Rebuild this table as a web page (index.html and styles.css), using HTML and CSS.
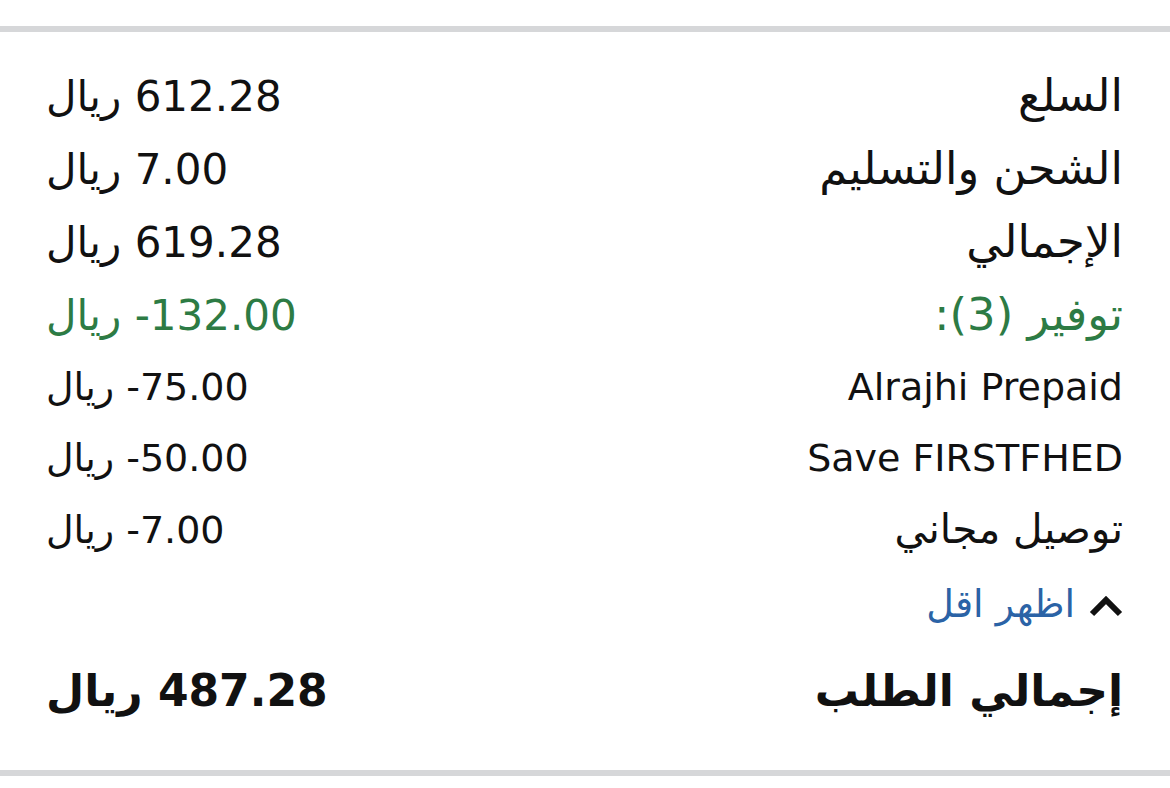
FILE: index.html
```html
<!DOCTYPE html>
<html lang="ar" dir="rtl">
<head>
<meta charset="utf-8">
<link rel="stylesheet" href="styles.css">
</head>
<body>
<div class="bar"></div>
<section class="summary">
  <div class="group main">
    <div class="row"><span class="label ar">السلع</span><span class="val"><bdi dir="ltr">612.28</bdi> ريال</span></div>
    <div class="row"><span class="label ar">الشحن والتسليم</span><span class="val"><bdi dir="ltr">7.00</bdi> ريال</span></div>
    <div class="row"><span class="label ar">الإجمالي</span><span class="val"><bdi dir="ltr">619.28</bdi> ريال</span></div>
    <div class="row save"><span class="label ar">توفير (3):</span><span class="val"><bdi dir="ltr">-132.00</bdi> ريال</span></div>
  </div>
  <div class="group sub">
    <div class="row"><span class="label">Alrajhi Prepaid</span><span class="val"><bdi dir="ltr">-75.00</bdi> ريال</span></div>
    <div class="row"><span class="label">Save FIRSTFHED</span><span class="val"><bdi dir="ltr">-50.00</bdi> ريال</span></div>
    <div class="row"><span class="label ar">توصيل مجاني</span><span class="val"><bdi dir="ltr">-7.00</bdi> ريال</span></div>
  </div>
  <a class="toggle" href="#">
    <svg class="chev" width="34" height="22" viewBox="0 0 34 22"><polyline points="3,19 17,5 31,19" fill="none" stroke="#111" stroke-width="6" stroke-linejoin="miter"/></svg>
    <span class="ar">اظهر اقل</span>
  </a>
  <div class="row total"><span class="label">إجمالي الطلب</span><span class="val"><bdi dir="ltr">487.28</bdi> ريال</span></div>
</section>
<div class="bar"></div>
</body>
</html>
```
FILE: styles.css
```css
html, body {
  margin: 0;
  padding: 0;
  background: #fff;
}
body {
  font-family: "DejaVu Sans", sans-serif;
  color: #111;
  width: 1170px;
  height: 788px;
  padding-top: 26px;
  box-sizing: border-box;
}
.bar {
  height: 6px;
  background: #d6d7d9;
}
.summary {
  padding: 28px 47px 0 46px;
  height: 738px;
  box-sizing: border-box;
  display: flex;
  flex-direction: column;
}
.row {
  display: flex;
  justify-content: space-between;
  align-items: baseline;
}
.ar {
  font-size: 1.07em;
}
.main .row {
  font-size: 42px;
  line-height: 72px;
}
.sub {
  padding-top: 0;
}
.sub .row {
  font-size: 38px;
  line-height: 71px;
}
.save {
  color: #2d7b44;
}
.toggle {
  display: flex;
  align-items: center;
  gap: 14px;
  color: #2b63a6;
  text-decoration: none;
  font-size: 38px;
  line-height: 76px;
  align-self: flex-start;
}
.toggle .ar {
  font-size: 1em;
}
.chev {
  display: block;
  margin-top: 4px;
}
.total {
  font-size: 44px;
  font-weight: bold;
  line-height: 98px;
}
```
